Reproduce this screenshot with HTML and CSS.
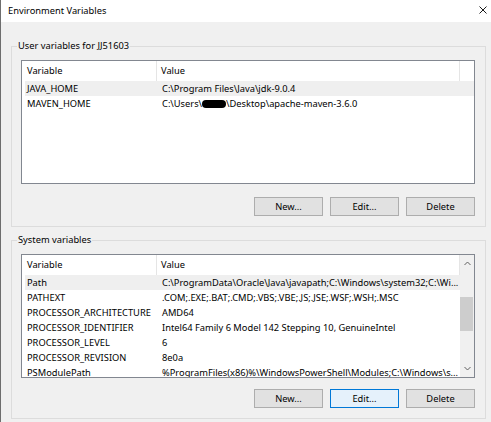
FILE: index.html
```html
<!DOCTYPE html>
<html>
<head>
<meta charset="utf-8">
<link rel="stylesheet" href="styles.css">
</head>
<body>
<div class="window">
  <div class="titlebar">
    <span class="title">Environment Variables</span>
    <svg class="close" width="8" height="8" viewBox="0 0 8 8"><path d="M0.5 0.5L7.5 7.5M7.5 0.5L0.5 7.5" stroke="#000" stroke-width="0.9" fill="none"/></svg>
  </div>
  <div class="content">
    <fieldset class="group">
      <legend>User variables for JJ51603</legend>
      <div class="list">
        <div class="list-main">
          <div class="row head"><div class="c1">Variable</div><div class="c2">Value</div></div>
          <div class="row sel"><div class="c1">JAVA_HOME</div><div class="c2">C:\Program Files\Java\jdk-9.0.4</div></div>
          <div class="row"><div class="c1">MAVEN_HOME</div><div class="c2">C:\Users\<span class="redact"></span>\Desktop\apache-maven-3.6.0</div></div>
        </div>
      </div>
      <div class="buttons b1">
        <button class="btn">New...</button>
        <button class="btn">Edit...</button>
        <button class="btn">Delete</button>
      </div>
    </fieldset>
    <fieldset class="group g2">
      <legend>System variables</legend>
      <div class="list">
        <div class="list-main">
          <div class="row head"><div class="c1">Variable</div><div class="c2">Value</div></div>
          <div class="row sel"><div class="c1">Path</div><div class="c2">C:\ProgramData\Oracle\Java\javapath;C:\Windows\system32;C:\Wi...</div></div>
          <div class="row"><div class="c1">PATHEXT</div><div class="c2">.COM;.EXE;.BAT;.CMD;.VBS;.VBE;.JS;.JSE;.WSF;.WSH;.MSC</div></div>
          <div class="row"><div class="c1">PROCESSOR_ARCHITECTURE</div><div class="c2">AMD64</div></div>
          <div class="row"><div class="c1">PROCESSOR_IDENTIFIER</div><div class="c2">Intel64 Family 6 Model 142 Stepping 10, GenuineIntel</div></div>
          <div class="row"><div class="c1">PROCESSOR_LEVEL</div><div class="c2">6</div></div>
          <div class="row"><div class="c1">PROCESSOR_REVISION</div><div class="c2">8e0a</div></div>
          <div class="row"><div class="c1">PSModulePath</div><div class="c2">%ProgramFiles(x86)%\WindowsPowerShell\Modules;C:\Windows\s...</div></div>
        </div>
        <div class="scrollbar">
          <svg class="arrow" width="7" height="5" viewBox="0 0 7 5"><path d="M0.5 4L3.5 1L6.5 4" stroke="#606060" stroke-width="1" fill="none"/></svg>
          <div class="track"><div class="thumb"></div></div>
          <svg class="arrow" width="7" height="5" viewBox="0 0 7 5"><path d="M0.5 1L3.5 4L6.5 1" stroke="#606060" stroke-width="1" fill="none"/></svg>
        </div>
      </div>
      <div class="buttons b2">
        <button class="btn">New...</button>
        <button class="btn focus">Edit...</button>
        <button class="btn">Delete</button>
      </div>
    </fieldset>
  </div>
</div>
</body>
</html>
```
FILE: styles.css
```css
* { box-sizing: border-box; }
html, body { margin: 0; padding: 0; background: #f0f0f0; }
body {
  font-family: "Noto Sans", "DejaVu Sans", sans-serif;
  font-size: 9.3px;
  color: #000;
}
.window {
  width: 491px;
  height: 422px;
  border-left: 1px solid #6e6e6e;
  background: #f0f0f0;
  overflow: hidden;
}
.titlebar {
  height: 22px;
  background: #fff;
  display: flex;
  align-items: center;
  justify-content: space-between;
  padding: 0 4px 0 7px;
}
.title { line-height: 22px; }
.close { margin-top: -2px; }
.content {
  padding: 16px 5px 0 10px;
}
.group {
  margin: 0;
  min-width: 0;
  border: 1px solid #dcdcdc;
  padding: 6px 10px 10px 9px;
}
.group.g2 { margin-top: 5px; }
.group legend {
  line-height: 16px;
  padding: 0 1px;
  margin-left: -4px;
}
.list {
  height: 124px;
  border: 1px solid #828790;
  background: #fff;
  display: flex;
  overflow: hidden;
}
.list-main {
  flex: 1;
  min-width: 0;
  overflow: hidden;
}
.row {
  display: grid;
  grid-template-columns: 132px 303px;
  margin-left: 3px;
  height: 15px;
  line-height: 15px;
  white-space: nowrap;
}
.row .c1 { padding-left: 2px; overflow: hidden; }
.row .c2 { padding-left: 5px; overflow: hidden; }
.row.head {
  grid-template-columns: 135px 303px;
  margin-left: 0;
  height: 20px;
  line-height: 20px;
}
.row.head .c1 { padding-left: 5px; border-right: 1px solid #e5e5e5; }
.row.head .c2 { padding-left: 4px; border-right: 1px solid #e5e5e5; }
.row.sel { background: #efefef; }
.redact {
  display: inline-block;
  width: 24px;
  height: 8px;
  background: #000;
  border-radius: 4px;
  vertical-align: -1px;
}
.scrollbar {
  width: 14px;
  background: #f0f0f0;
  display: flex;
  flex-direction: column;
  align-items: center;
}
.arrow { margin: 6px 0; flex: none; }
.track { flex: 1; width: 100%; padding: 25px 1px 0 0; }
.thumb { height: 34px; background: #cdcdcd; }
.buttons {
  display: flex;
  justify-content: flex-end;
  gap: 7px;
}
.buttons.b1 { margin-top: 13px; }
.buttons.b2 { margin-top: 11px; }
.btn {
  width: 69px;
  height: 19px;
  padding: 0;
  font: inherit;
  color: #000;
  background: #e1e1e1;
  border: 1px solid #adadad;
  border-radius: 0;
}
.btn.focus {
  background: #e5f1fb;
  border-color: #0078d7;
}
```
